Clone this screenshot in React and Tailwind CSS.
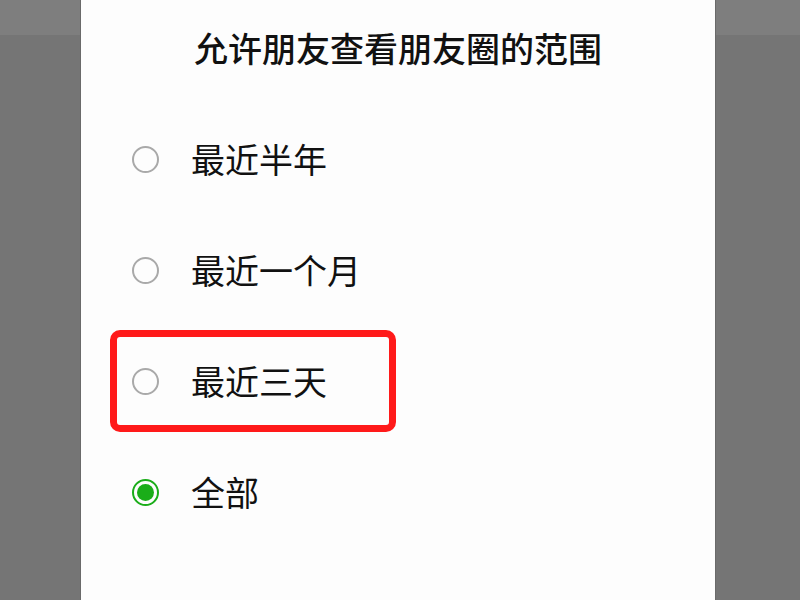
import React from "react";

const options = [
  { label: "最近半年", checked: false, marked: false },
  { label: "最近一个月", checked: false, marked: false },
  { label: "最近三天", checked: false, marked: true },
  { label: "全部", checked: true, marked: false },
];

function Radio({ checked }) {
  if (checked) {
    return (
      <span className="flex w-[27px] h-[27px] shrink-0 items-center justify-center rounded-full border-[2px] border-[#1aad19]">
        <span className="block w-[17px] h-[17px] rounded-full bg-[#1aad19]" />
      </span>
    );
  }
  return <span className="block w-[27px] h-[27px] shrink-0 rounded-full border-[2px] border-[#a9a9a9]" />;
}

function Side() {
  return (
    <div className="flex flex-col flex-1 h-full">
      <div className="h-[35px] bg-[#7e7e7e]" />
      <div className="flex-1 bg-[#757575]" />
    </div>
  );
}

export default function App() {
  return (
    <div
      className="flex w-[800px] h-[600px] overflow-hidden"
      style={{ fontFamily: '"Noto Sans CJK SC", "Noto Sans", sans-serif' }}
    >
      <div className="w-[80px] h-full flex">
        <Side />
      </div>
      <div className="w-[636px] h-full bg-[#fdfdfd] border-x border-[#6a6a6a] flex flex-col">
        <div className="h-[96px] flex items-center justify-center text-[34px] leading-none font-medium text-[#111]">
          允许朋友查看朋友圈的范围
        </div>
        <div className="mt-[12px] flex flex-col gap-[9px] pl-[29px]">
          {options.map((o) => (
            <div
              key={o.label}
              className={
                "w-[286px] h-[102px] flex items-center pl-[15px] rounded-[10px] border-[7px] " +
                (o.marked ? "border-[#ff1a1a]" : "border-transparent")
              }
            >
              <Radio checked={o.checked} />
              <span className="ml-[32px] text-[34px] leading-none text-[#111]">{o.label}</span>
            </div>
          ))}
        </div>
      </div>
      <div className="flex-1 h-full flex">
        <Side />
      </div>
    </div>
  );
}
